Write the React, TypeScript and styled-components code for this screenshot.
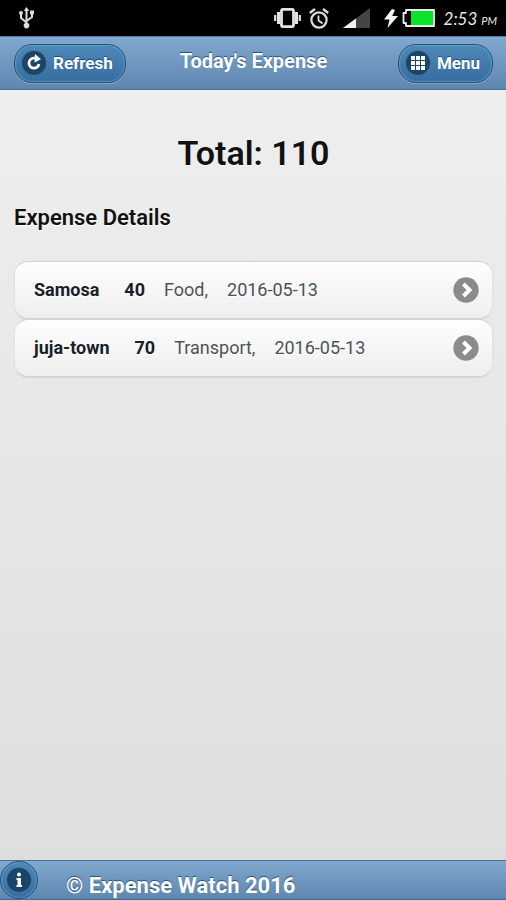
import React from "react";
import styled, { createGlobalStyle } from "styled-components";

const GlobalStyle = createGlobalStyle`
  * { box-sizing: border-box; }
  body {
    margin: 0;
    background: #dddddd;
    font-family: Roboto, "Liberation Sans", sans-serif;
  }
  h1, h2, p, ul { margin: 0; padding: 0; }
`;

const Page = styled.div`
  display: flex;
  flex-direction: column;
  min-height: 100vh;
  background: linear-gradient(#f0f0f0, #dddddd);
`;

const StatusBar = styled.div`
  display: flex;
  align-items: center;
  height: 36px;
  padding: 0 9px 0 18px;
  background: #000;
  color: #e8e8e8;

  svg { display: block; flex: none; }
`;

const StatusIcons = styled.div`
  display: flex;
  align-items: center;
  margin-left: auto;
`;

const Gap = styled.span<{ $size: number }>`
  width: ${(p) => p.$size}px;
`;

const Clock = styled.span`
  display: flex;
  align-items: baseline;
  gap: 4px;
  margin-left: 9px;
  padding-top: 3px;
  font: italic 400 17px/20px Lato, sans-serif;

  small { font-size: 11px; }
`;

const Header = styled.header`
  display: grid;
  grid-template-columns: 1fr auto 1fr;
  align-items: center;
  height: 54px;
  padding: 0 13px 0 14px;
  background: linear-gradient(#81a8ce, #5e87b0);
  border-top: 1px solid #527ba3;
  border-bottom: 1px solid #456f9a;
`;

const Title = styled.h1`
  padding-bottom: 4px;
  color: #fff;
  font-size: 20px;
  line-height: 26px;
  font-weight: 700;
  text-shadow: 0 -1px 1px #254f7a;
`;

const PillButton = styled.button<{ $end?: boolean }>`
  display: flex;
  align-items: center;
  justify-self: ${(p) => (p.$end ? "end" : "start")};
  gap: 6px;
  height: 39px;
  padding: 0 12px 0 6px;
  border: 1px solid #225377;
  border-radius: 18px;
  background: linear-gradient(#4e89b8, #376da0);
  box-shadow: inset 0 0 1px 1px rgba(120, 185, 225, 0.5),
    0 1px 1px rgba(255, 255, 255, 0.25);
  color: #fff;
  font: 700 17px/22px Roboto, sans-serif;
  text-shadow: 0 -1px 1px #194b7e;
  cursor: pointer;

  svg { display: block; }
`;

const Content = styled.main`
  flex: 1;
  padding: 40px 13px 20px 14px;
  color: #111;
  text-shadow: 0 1px 0 #fff;
`;

const Total = styled.h2`
  font-size: 34px;
  line-height: 46px;
  font-weight: 600;
  text-align: center;
`;

const Subheading = styled.h2`
  margin-top: 28px;
  font-size: 22px;
  line-height: 28px;
  font-weight: 600;
`;

const ExpenseList = styled.ul`
  margin-top: 29px;
  list-style: none;
`;

const ExpenseLink = styled.a`
  display: flex;
  align-items: center;
  height: 58px;
  padding: 0 13px 0 19px;
  border: 1px solid #d2d2d2;
  border-left-color: #e2e2e2;
  border-right-color: #e2e2e2;
  border-radius: 14px;
  background: linear-gradient(#fefefe, #eeeeee);
  box-shadow: 0 1px 1px rgba(0, 0, 0, 0.08);
  color: #4a5359;
  font-size: 18px;
  line-height: 24px;
  text-decoration: none;

  strong { color: #18202a; }
  svg { display: block; margin-left: auto; }
`;

const Amount = styled.strong`
  margin: 0 19px 0 25px;
`;

const ExpenseDate = styled.span`
  margin-left: 19px;
`;

const Footer = styled.footer`
  display: flex;
  align-items: center;
  height: 40px;
  border-top: 1px solid #456f9a;
  border-bottom: 1px solid #3e6d9c;
  background: linear-gradient(#81a8ce, #5e87b0);
  color: #fff;
`;

const InfoButton = styled.button`
  display: grid;
  place-items: center;
  width: 38px;
  height: 38px;
  padding: 0;
  border: 1px solid #225377;
  border-radius: 50%;
  background: linear-gradient(#4e89b8, #376da0);
  box-shadow: inset 0 0 1px 1px rgba(120, 185, 225, 0.5);
  cursor: pointer;
`;

const Copyright = styled.p`
  margin-left: 28px;
  padding-top: 12px;
  font-size: 22px;
  line-height: 26px;
  font-weight: 700;
  text-shadow: 0 -1px 1px #254f7a;
`;

const UsbIcon = () => (
  <svg width="17" height="22" viewBox="0 0 17 22" fill="none" stroke="#ddd" strokeWidth="2">
    <path d="M8.500 18V3M8.500 15.500L3 11V7M8.500 14L14 10V6" />
    <path d="M5.800 4L8.500 0L11.200 4Z" fill="#ddd" stroke="none" />
    <circle cx="8.500" cy="18.600" r="2.800" fill="#ddd" stroke="none" />
    <circle cx="3" cy="6" r="2" fill="#ddd" stroke="none" />
    <path d="M12 3.500h4v3.800h-4z" fill="#ddd" stroke="none" />
  </svg>
);

const VibrateIcon = () => (
  <svg width="27" height="20" viewBox="0 0 27 20" fill="none" stroke="#e4e4e4">
    <rect x="7.500" y="1.400" width="12" height="17.200" rx="1.500" strokeWidth="2.800" />
    <path d="M4.500 4v12M22.500 4v12" strokeWidth="3" />
    <path d="M1.200 7v6M25.800 7v6" strokeWidth="2.200" />
  </svg>
);

const AlarmIcon = () => (
  <svg width="20" height="21" viewBox="0 0 20 21" fill="none" stroke="#dcdcdc">
    <circle cx="10" cy="12" r="7.600" strokeWidth="2.200" />
    <path d="M9.500 7.500v5l4 3" strokeWidth="1.800" />
    <path d="M.8 5L6 1M14 1l5.200 4" strokeWidth="2.400" />
  </svg>
);

const SignalIcon = () => (
  <svg width="27" height="20" viewBox="0 0 27 20">
    <path d="M0 20L27 0V20Z" fill="#454545" />
    <path d="M0 20L13 10.400V20Z" fill="#f2f2f2" />
  </svg>
);

const BoltIcon = () => (
  <svg width="14" height="19" viewBox="0 0 14 19">
    <path d="M8 0L0 10.500H5.500L3.500 19L14 7H8.200L11 1Z" fill="#f4f4f4" />
  </svg>
);

const BatteryIcon = () => (
  <svg width="33" height="18" viewBox="0 0 33 18">
    <path d="M4 1H32V17H4V14H1.500V4H4Z" fill="#000" stroke="#eee" strokeWidth="1.800" strokeLinejoin="round" />
    <rect x="9" y="2" width="22" height="14" fill="#0be32b" />
  </svg>
);

const IconDisc = ({ children }: { children: React.ReactNode }) => (
  <svg width="26" height="26" viewBox="0 0 26 26" aria-hidden="true">
    <circle cx="13" cy="13" r="12.500" fill="#1c4467" stroke="#4d86b0" strokeOpacity=".6" />
    {children}
  </svg>
);

const RefreshGlyph = () => (
  <IconDisc>
    <path d="M14.500 8.200H12.800A5 5 0 1 0 17.900 14" fill="none" stroke="#fff" strokeWidth="2.800" />
    <path d="M14 4L20 9.200L13.500 12.500Z" fill="#fff" />
  </IconDisc>
);

const GridGlyph = () => (
  <IconDisc>
    {[6, 11, 16].map((y) =>
      [6, 11, 16].map((x) => (
        <rect key={`${x}-${y}`} x={x} y={y} width="4" height="4" fill="#fff" />
      ))
    )}
  </IconDisc>
);

const InfoGlyph = () => (
  <IconDisc>
    <circle cx="13" cy="7.500" r="2" fill="#fff" />
    <path d="M10.500 11H15V18H16V20H10.500V18H11.500V13H10.500Z" fill="#fff" />
  </IconDisc>
);

const ChevronGlyph = () => (
  <svg width="26" height="26" viewBox="0 0 26 26" aria-hidden="true">
    <circle cx="13" cy="13" r="12.700" fill="#8b8b8b" />
    <path d="M10.500 7L16.500 13L10.500 19" fill="none" stroke="#fff" strokeWidth="4" />
  </svg>
);

const expenses = [
  { name: "Samosa", amount: 40, category: "Food", date: "2016-05-13" },
  { name: "juja-town", amount: 70, category: "Transport", date: "2016-05-13" },
];

export default function App() {
  const total = expenses.reduce((sum, e) => sum + e.amount, 0);
  return (
    <>
      <GlobalStyle />
      <Page>
        <StatusBar>
          <UsbIcon />
          <StatusIcons>
            <VibrateIcon />
            <Gap $size={8} />
            <AlarmIcon />
            <Gap $size={14} />
            <SignalIcon />
            <Gap $size={14} />
            <BoltIcon />
            <Gap $size={4} />
            <BatteryIcon />
            <Clock>
              2:53 <small>PM</small>
            </Clock>
          </StatusIcons>
        </StatusBar>
        <Header>
          <PillButton type="button">
            <RefreshGlyph />
            Refresh
          </PillButton>
          <Title>Today's Expense</Title>
          <PillButton type="button" $end>
            <GridGlyph />
            Menu
          </PillButton>
        </Header>
        <Content>
          <Total>Total: {total}</Total>
          <Subheading>Expense Details</Subheading>
          <ExpenseList>
            {expenses.map((e) => (
              <li key={e.name}>
                <ExpenseLink href="#">
                  <strong>{e.name}</strong>
                  <Amount>{e.amount}</Amount>
                  <span>{e.category},</span>
                  <ExpenseDate>{e.date}</ExpenseDate>
                  <ChevronGlyph />
                </ExpenseLink>
              </li>
            ))}
          </ExpenseList>
        </Content>
        <Footer>
          <InfoButton type="button" aria-label="Info">
            <InfoGlyph />
          </InfoButton>
          <Copyright>© Expense Watch 2016</Copyright>
        </Footer>
      </Page>
    </>
  );
}
